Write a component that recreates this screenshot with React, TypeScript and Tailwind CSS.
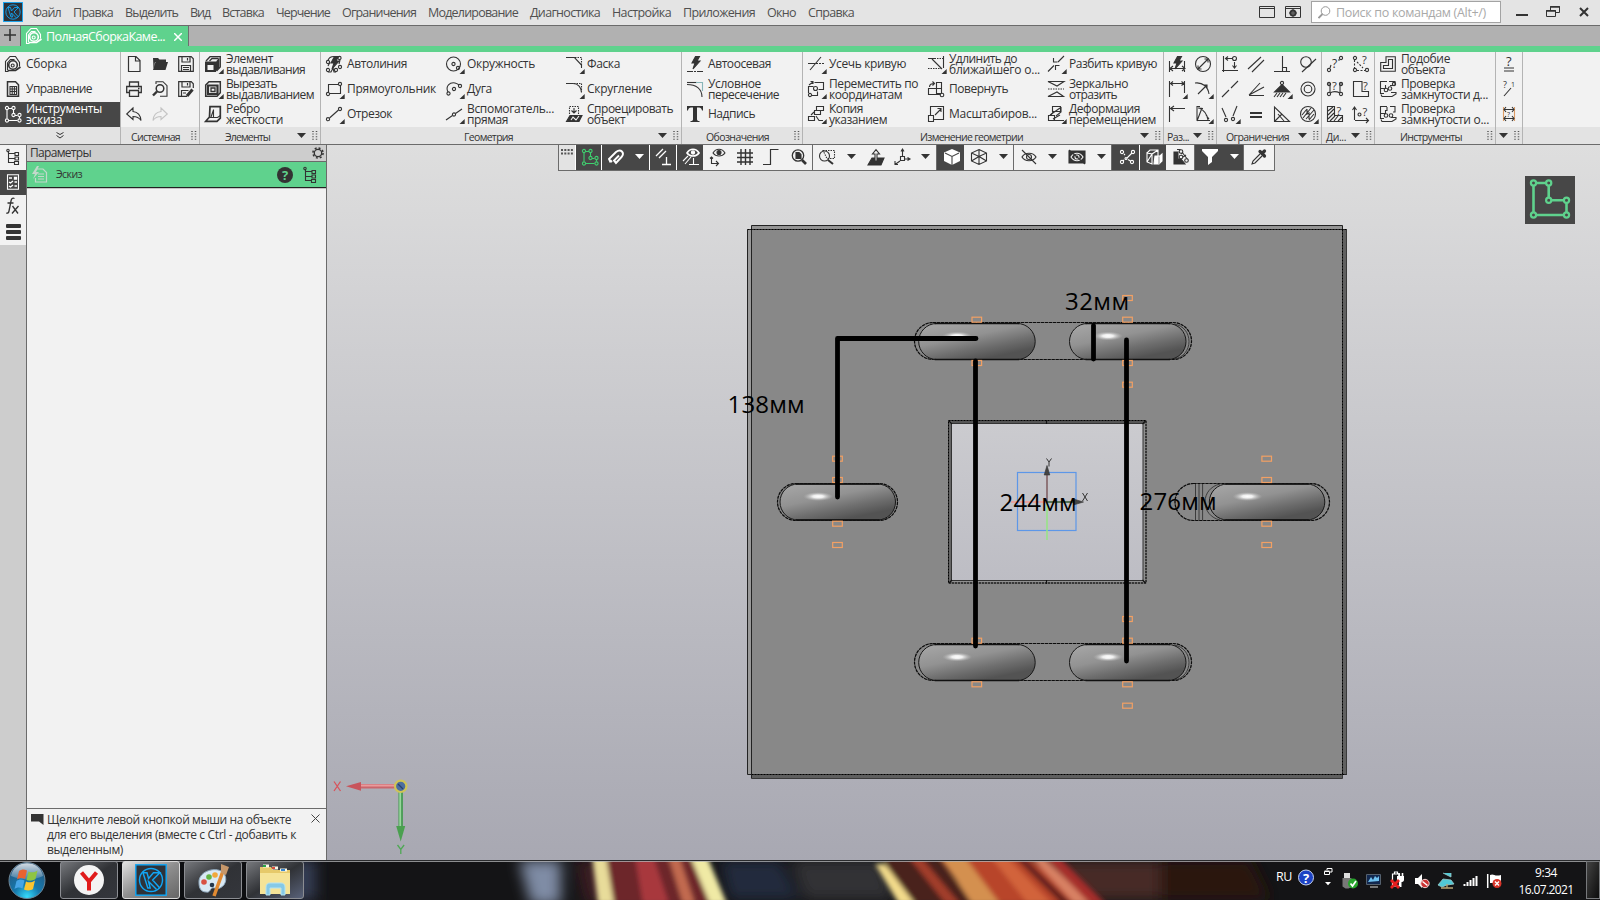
import { useLayoutEffect, useRef } from "react";
import type { ReactNode } from "react";

/* Text whose tracking is adjusted so that it occupies a given width. */
function T({ w, children, className = "" }: { w: number; children: string; className?: string }) {
  const ref = useRef<HTMLSpanElement>(null);
  useLayoutEffect(() => {
    const el = ref.current;
    if (!el) return;
    el.style.letterSpacing = "0px";
    const natural = el.getBoundingClientRect().width;
    el.style.letterSpacing = `${(w - natural) / children.length}px`;
  }, [w, children]);
  return (
    <span ref={ref} className={`block whitespace-pre ${className}`}>
      {children}
    </span>
  );
}

const c = (x: number, y: number, r = 1.6, fill = "none") => <circle cx={x} cy={y} r={r} fill={fill} />;
const q = (x: number, y: number, size = 11) => (
  <text x={x} y={y} fontSize={size} fill="#333" stroke="none" fontFamily="Open Sans, sans-serif">?</text>
);
const bolt = "M8.5 0.5h4L10 5h3L6 13l2-6H5z";

const icons: Record<string, ReactNode> = {
  assembly: (
    <>
      <path d="M3.5 15.500H.5V5.500L5 .5h5.500l4 6v4" />
      <circle cx="8" cy="9" r="4.300" strokeWidth="1.600" />
      <circle cx="7.700" cy="9.500" r="1.500" />
      <path d="M2.500 14.500h8l5-3.500" strokeWidth="1.700" />
      <path d="M2.500 14V7l3-3.500h4" />
    </>
  ),
  manage: (
    <>
      <path d="M2.500.7h8l3 3v11.600h-11z" strokeWidth="1.500" />
      <path d="M5 5.500h6.500v8H5zM5 8h6.500M5 10.500h6.500M7.200 5.500v8M9.400 5.500v8" />
    </>
  ),
  sketch: (
    <>
      <path d="M2 4v8.500M4 14.500h8.500M14.500 12.500V11M12.500 9.500H10M8.500 7.500V4M3.500 2.500H7" />
      {c(2, 2)}{c(8.500, 2)}{c(8.500, 9)}{c(14.500, 9)}{c(2, 14.500)}{c(14.500, 14.500)}
    </>
  ),
  newf: <path d="M2.500.500h7.500l4 4v11H2.500zM9.500.500v4.500H14" strokeWidth="1.200" />,
  open: <path d="M1 2h5l1.500 1.500H14V6H3L1.500 13zM3.500 6H16l-2.500 8H1z" fill="currentColor" stroke="none" />,
  save: <path d="M.7.7h12.500l2.100 2.100v12.500H.7zM4 .7v5.300h8V.7M9.500 2v2.500M3.500 15.300V9.500h9v5.800M5 11.500h6M5 13.500h6" strokeWidth="1.200" />,
  saveas: (
    <>
      <path d="M9 15.300H.7V.7h12.500l2.100 2.100V7M4 .7v5.300h8V.7M9.500 2v2.500M3.500 15.300V9.500h7M5 12h3" strokeWidth="1.200" />
      <path d="M9 15 14.500 8.500" strokeWidth="3" />
    </>
  ),
  print: <path d="M3.500 5V1h9v4M3 11.500H.7V5.500h14.600v6H13M3.500 9.500h9v5.800h-9zM12 7.500h1.500" strokeWidth="1.300" />,
  preview: (
    <>
      <path d="M4 3V.7h7l4 4v10.600H8" />
      <circle cx="8" cy="7.500" r="3.800" strokeWidth="1.500" />
      <path d="m5 10.500-4 4" strokeWidth="2.400" />
    </>
  ),
  undo: <path d="M7 2 .7 8 7 13.500V10.500c4 0 6 1 8 4C14.500 9 12 6 7 5.500z" />,
  redo: <path d="M9 2l6.300 6L9 13.500V10.500c-4 0-6 1-8 4C1.500 9 4 6 9 5.500z" stroke="#c4c4c4" />,
  extrude: (
    <>
      <path d="M0 5.500h11V16H0z" fill="#333" stroke="none" />
      <path d="M2.500 9H8.500v5H2.500z" fill="#f2f2f2" stroke="none" />
      <path d="M1 5 5 .7h10.300V11L11.500 15M4.500 5 7 2.500h6.500" strokeWidth="1.300" />
      <path d="M11 5.500l3.500-4v10L11 15z" fill="#333" stroke="none" />
    </>
  ),
  cut: (
    <>
      <path d="M.7 4 4 .7h11.300v11L12 15.300H.7z" strokeWidth="1.500" />
      <path d="M3 4.500h9.500v8.500H3z" strokeWidth="2.200" />
      <path d="M6 7h4v3.500H6z" fill="#f2f2f2" strokeWidth="1.300" />
    </>
  ),
  rib: (
    <>
      <path d="M5 .7h10.300v11.500L12 15.300H.7L4.500 11z" strokeWidth="1.700" />
      <path d="M8.500 3.500v8M4.500 11.500h8l3-2M8.500 4 6 11" />
    </>
  ),
  autoline: (
    <>
      <path d="M2 4.500C3 1 5 .5 8 .5M2 10l2-4M2 16h3l2-4 1 4h2M14 4l-1 4" />
      <path d={bolt} fill="#333" />
      {c(2, 6)}{c(13.500, 2)}{c(2, 14)}{c(10, 14)}{c(14, 11)}
    </>
  ),
  rect: <><path d="M2.500 11V3.500h10M14.500 5v7.500H4" />{c(14, 3)}{c(2, 13)}</>,
  line: <><path d="m3.500 12 9-8" />{c(2, 13.200)}{c(14, 3)}</>,
  circle: <><circle cx="7.500" cy="8" r="7" />{c(7.500, 8)}{c(12, 12)}</>,
  arc: <><path d="M2 11C-1 5 4 1 9 2c2 .5 3 1 4 2" />{c(8, 8)}{c(2.500, 12.500)}{c(14, 5)}</>,
  auxline: <><path d="M0 14 6.500 9.500M9.500 7.500 16 3" />{c(8, 8.500)}</>,
  chamfer: <><path d="M0 1.500h8.500l7 7.500v3" /><path d="M9 1.500h6.500v8" strokeDasharray="1.500 1" /></>,
  fillet: <><path d="M0 2.500h7c5 0 8.500 4 8.500 9" /><path d="M8 2.500h7.500v8" strokeDasharray="1.500 1" /></>,
  project: (
    <>
      <path d="M3.500 8V.5h9V8" strokeDasharray="1.500 1" />
      <path d="M8 2v5M5.500 4.500 8 7l2.500-2.500" />
      <path d="M4 9.500h12l-3 6H.5z" fill="#333" />
      <path d="m5 14 2-3 3 3 3-4" stroke="#f2f2f2" />
    </>
  ),
  autoaxis: <><path d={bolt} fill="#333" /><path d="M0 15.500h16" strokeDasharray="6 1 2 1" /></>,
  intersect: <><path d="M0 3.500c9 0 15 4 15 12.500" /><path d="M0 1.500h10" /><path d="M9 1.500h6.500V10" stroke="#88b5b8" /></>,
  text: <path d="M0 0h16v4.500h-1C14.500 2 13.500 1.500 10 1.500V13c0 1.500.5 2 2.500 2v1h-9v-1c2 0 2.500-.5 2.500-2V1.500C2.500 1.500 1.500 2 1 4.500H0z" fill="#333" stroke="none" />,
  trim: <><path d="m2 14 11-13M0 7.500h7" /><path d="M8 7.500h9" strokeDasharray="2 1" /></>,
  move: <><path d="M6.500 1.500h9v7h-5M.5 12V5.500h5M3.500 14.500h6v-4M1 4l4-3M2.500.5H5V3" />{c(7.500, 7.500, 2)}{c(2, 14)}</>,
  copy: <><path d="M8.500.5h7v4h-7zM6.500 4.500h6v4h-6zM.5 10.500h6v4h-6zM3 9l3-3M8 10l3 4.500h4" /></>,
  extend: <><path d="M0 2.500h8M4 3l10 10M15.500 0v12" /><path d="M0 12.500h13M9 2.500h6" strokeDasharray="1.500 1" /></>,
  rotate: <><path d="M8.500 1.500h5v11h-5zM.5 7.500h13v6H.5zM1.500 6c0-3 2-3.500 5-3.500M4.500.500l2 2-2 2" />{c(14, 14, 1.800, "#f2f2f2")}</>,
  scale: <><path d="M2.500 9V.5h13v13H6M7 9l6-6M9.500 2.500H13V6M.5 9.500h5v6h-5z" /></>,
  split: <><path d="M0 15.500 6 9.500M10 6l6-6M5.500 2v4h4M7.500 14V9.500h4" /></>,
  mirror: <><path d="M0 .5h16L9 5zM15.500 15.500H0l9-4.500zM9 11l6 4" /><path d="M0 8h16" strokeDasharray="1.500 1" /></>,
  deform: <><path d="M4.500.5h8v5h-8zM.5 9.500h6v5h-6zM7 14.500h9M2 9l10-7M5 13l7-4" /><path d="m6 5-3 4M13 1v5l-5 4" /></>,
  autodim: <><path d="M.5 5v11M15.500 5v11M2 12.500h13M4 10l-3 2.500L4 15M13 10l3 2.500L13 15" /><path d={bolt} fill="#333" /></>,
  diameter: <><circle cx="8" cy="8" r="7.500" /><path d="m3 13 10-10M3 9.500V13h3.500M13 6.500V3H9.500" /></>,
  dimline: <><path d="M.5 0v16M15.500 0v12M2 2.500h13M4 .5l-2.500 2L4 4.500M12.500.5l2.500 2-2.500 2" /></>,
  dimarc: <><path d="M0 2c8-1 13 4 14 11M3 13l9-9M8 4h4v4" /></>,
  dimbase: <><path d="M.5 0v16M1 2.500h15M5 0 1.500 2.500 5 5" /></>,
  dimangle: <><path d="M2 14.500V.5h3M2 14.500h13M2 15l5-13M4 2c5 2 8 6 9 12M3 2l5 .5M14 13l-3-4" /></>,
  constraint: <><path d="M1.500 0v16M0 14.500h16M4 2.500h6M6 .5 3.500 2.500 6 4.500M12.500 6v6M10.500 9.500l2 2.500 2-2.500" />{c(12.500, 2.500, 2)}</>,
  parallel: <path d="M0 13 13 1M4 16 16 4" />,
  perp: <path d="M0 15.500h16M8.500 15V0M8.500 11.500h4V15" />,
  tangent: <><circle cx="6" cy="6" r="5.300" /><path d="M2 16 16 3" /></>,
  collinear: <path d="m0 16 7-7M9 7l7-7" />,
  angle: <path d="M1 14.500h15M1 14 12 2M1 14 16 6" />,
  fix: <><circle cx="8" cy="2" r="1.600" /><path d="M8 3.500 15.500 11H.5z" fill="#333" /><path d="m3 12-3 4M6 12l-3 4M9 12l-3 4M12 12l-3 4" /></>,
  concentric: <><circle cx="8" cy="8" r="7" /><circle cx="8" cy="8" r="3.800" /></>,
  symmetric: <><path d="m0 2 4 9M15 0l-4 10" />{c(4, 14)}{c(11, 13)}</>,
  equal: <path d="M2 7h12M2 11h12" strokeWidth="1.800" />,
  tri: <path d="M.5 1v14.500h15zM1 15 8 8M4 8l6 7" />,
  hatchcirc: <><circle cx="8" cy="8" r="7.500" /><path d="m2 9 5-6M3 12l8-10M6 13l8-9M9 14l5-6M7 3v5l2-1v6" /></>,
  q1: <>{q(5, 12, 12)}{c(2, 14)}{c(14, 2)}<path d="m3 12 1-3M11 4h2" /></>,
  q2: <>{q(9, 8)}{c(2, 2)}{c(2, 14)}{c(14, 14)}<path d="M1.500 4v8M4 14.500h8M4 6l6 6" strokeDasharray="2 1.500" /></>,
  q3: <>{q(5, 9)}<path d="M1 3h3M12 3h3M3 4v7M13 4v7M3 12c3-2 6-2 10 0" />{c(2, 3)}{c(14, 3)}{c(2, 13)}{c(14, 13)}</>,
  q4: <>{q(10, 9)}<path d="M9 .5H.5v15h15v-5H9z" /></>,
  q5: <>{q(9.500, 9)}<path d="M.5.5h7v9h8v6H.5z" /><path d="m1 5 5-4M1 9l6-6M1 13l6-6M3 15l5-5M7 15l4-5M11 15l4-4" /></>,
  q6: <>{q(9.500, 10)}<path d="M1.500 14V2M-.5 4l2-3 2 3M2 14.500h13M13 12l2.500 2.500L13 17" />{c(6.500, 8.500, 1.500)}</>,
  offset: <><path d="M6 .7h9.300v14.600H.7V6.500H6z" /><path d="M8.500 3.500h4v9H3.500V9.500h5z" /></>,
  check1: <><path d="M7 .5H.5v12H4M5.500 4v3.500H1M9 .5h6v4M11 11.500h5v1.500l-4 2.500H2l-1-2M10 4.500h5" />{c(6, 9, 1.800)}{c(10, 7.500, 1.800)}{c(14, 3)}</>,
  check2: <><path d="M7 .5H.5v12H4M5.500 4v3.500H1M10 .5h5v5.500h-2M11 11.500h5v1.500l-4 2.500H2l-1-2M7 1v3.500H5" />{c(6, 9.500, 1.800)}{c(11, 9.500, 1.800)}</>,
  qa: <>{q(5, 9.500, 13)}<path d="M3 12h10M3 15h10" /></>,
  qb: <>{q(2, 7, 9)}<text x="10" y="6" fontSize="7" fill="#333" stroke="none" fontFamily="Open Sans">1</text><path d="m3 15 7-8" /></>,
  qc: <><path d="M2.500 1v14M13.500 1v14" stroke="#dc9b63" /><path d="M3 3.500h10M5 1 3 3.500 5 6M11 1l2 2.500L11 6M3 12.500h10M5 10l-2 2.500L5 15M11 10l2 2.500-2 2.500" />{q(6, 11, 7)}</>,
  tree: <><path d="M3.500 2v11.500H9M3.500 4.500H10M3.500 9.500H10" />{c(3, 1.500, 1.200)}<path d="M10 3.500h3.500v3H10zM10 8h3.500v3H10zM9.500 12.500h4v3h-4z" /></>,
  params: <><path d="M2.500.7h11v14.600h-11z" /><path d="M4 4h3M4 8l1.500 1L8 7M4 12l1.500 1L8 11M9.500 3.500h2v1.500h-2zM9.500 8h2.500M9.500 12h2.500" strokeWidth="1.300" /></>,
  magnet: <><path d="M2.500 13.500 1 10l7-7c5-4 9 1 5.500 5L8 14l-2-2.500 5-5M1 10l3 3M6 11l2 3" strokeWidth="1.900" /></>,
  snap: <path d="m0 7 7-7M3 9l7-7M6 15.500h9M10.500 8v7.500" strokeWidth="1.300" />,
  snapeye: <><path d="M4 4c3-5 9-5 12 0-3 4-9 4-12 0z" strokeWidth="1.700" />{c(10, 3.500, 1.600, "currentColor")}<path d="m0 12 5-5M2 15l6-7M6 15.500h10M10.500 9v6" /></>,
  eyeaxis: <><path d="M3 4c3-5 9-5 12 0-3 4-9 4-12 0z" />{c(9, 3.500, 2, "currentColor")}<path d="M1.500 8v6.500H8M6 12l2.500 2.500L6 17M0 9.500 1.500 8 3 9.500" /></>,
  grid: <path d="M0 4h16M0 8.500h16M0 13h16M4 0v16M8.500 0v16M13 0v16" strokeWidth="1.400" />,
  step: <path d="M0 15.500h7.500V.5h8" strokeWidth="1.200" />,
  zoomp: <><circle cx="7" cy="6.500" r="5.700" strokeWidth="1.300" /><path d="M5 3.500h3l2 2v4H5z" fill="#333" /><path d="m11 11 4 4" strokeWidth="2.600" /></>,
  zoomw: <><circle cx="5.500" cy="7" r="5" /><path d="M4 1.500h11.500v8H8z" strokeDasharray="1.500 1" /><path d="m9 11 5 4" strokeWidth="2" /></>,
  normal: <><path d="M4 9h12l-3 7H0z" fill="#333" /><path d="M7 12V5H4.500L8 .7 11.500 5H9v7z" fill="#f2f2f2" /></>,
  axes: <><path d="M6.500 7.500h4v4h-4zM8.500 7.500V0M7 2.500 8.500 0 10 2.500M10.500 10H16M13.500 8.500 16 10l-2.500 1.500M6 12l-5 3.500M1 12v3.500h3" /></>,
  cube: <><path d="M8 0 16 3.500v8.500L8 16 0 12V3.500z" fill="currentColor" stroke="none" /><path d="m1 4 7 3.500L15 4M8 7.500V16" stroke="#474747" /></>,
  cubewire: <path d="M8 .5 15.500 4v8L8 15.500.5 12V4zM.5 4 8 7.500 15.500 4M8 7.500v8M8 .5v7M.5 12 8 7.500l7.500 4.500" />,
  hide: <><path d="M1 8c3-5 11-5 14 0-3 5-11 5-14 0z" strokeWidth="1.200" />{c(8, 8, 2.500)}<path d="m1 1 14 14" /></>,
  eyebox: <><path d="M0 2h16v12H0z" fill="#333" /><path d="M2 8c3-5 9-5 12 0-3 5-9 5-12 0z" stroke="#f2f2f2" fill="#333" /><circle cx="8" cy="8" r="2" stroke="#f2f2f2" /><path d="m0 1 16 14" /></>,
  points: <><path d="m8 9 5-5M5 5l1 1M5 11l-1 1" />{c(3, 3)}{c(14, 3)}{c(3, 13)}{c(13, 13)}{c(7, 9.500, 1)}<path d="m9 10.500 2.500 1.500" /></>,
  boxes: <><path d="M1 4 4 1h8v6M1 4v9l5 2V5zM6 5l6-4M6 5l-5 8" /><path d="M9 7h5l2-2v7l-3 3H8z" fill="#fff" /><path d="M13 7.500V15" stroke="#999" /></>,
  sketch3: <><path d="M1 3v12h11L8 10H5V3z" fill="#333" /><path d="M4 .5h3l8 10.500M8 5l2-2M10 8l3-2" />{c(8, 2.500, 1.800, "#f2f2f2")}{c(8, 8, 1.800, "#f2f2f2")}{c(13.500, 11.500, 1.800, "#f2f2f2")}</>,
  filter: <path d="M0 0h16v2l-6 6v5l-4 3V8L0 2z" fill="currentColor" stroke="none" />,
  picker: <><path d="m9 5-7 7-1 3 3-1 7-7" /><path d="m9 2.500 4.500 4.500M11 4.500l2.500-2.500" fill="#333" strokeWidth="3.200" strokeLinecap="round" /></>,
};

function Icon({ n, mark = false }: { n: string; mark?: boolean }) {
  return (
    <svg width="16" height="16" viewBox="0 0 16 16" fill="none" stroke="currentColor" strokeWidth="1.1" className="block shrink-0 overflow-visible">
      {icons[n]}
      {mark && <path d="M18.700 13v5h-5.200z" fill="#333" stroke="none" />}
    </svg>
  );
}

type Line = [string, number];
type Item = { i: string; m?: boolean; l?: Line[] };

function Cell({ item, pad, gap }: { item: Item; pad: string; gap: string }) {
  return (
    <div className={`flex h-[25px] items-start ${pad}`}>
      <div className={`pt-1 ${gap}`}>
        <Icon n={item.i} mark={item.m} />
      </div>
      {item.l && (
        <div className="flex h-[25px] flex-col items-start justify-center pb-[2px] text-[12px] leading-[11px]">
          {item.l.map(([t, w]) => (
            <T key={t} w={w}>{t}</T>
          ))}
        </div>
      )}
    </div>
  );
}

const Down = ({ className = "" }: { className?: string }) => (
  <svg width="9" height="5" viewBox="0 0 9 5" className={`shrink-0 ${className}`}>
    <path d="M0 0h9L4.500 5z" fill="currentColor" />
  </svg>
);

const Dots = () => (
  <svg width="6" height="9" viewBox="0 0 6 9" className="mr-[2px] shrink-0">
    <path d="M1 0v9M4.500 0v9" stroke="#555" strokeWidth="1.500" strokeDasharray="1 1.600" />
  </svg>
);

type GroupDef = { w: string; cols: Item[][]; col: string; gap: string; label?: Line; ml?: string; down?: boolean };

function Group({ g }: { g: GroupDef }) {
  return (
    <div className={`flex shrink-0 flex-col border-l border-[#b4b4b4] ${g.w}`}>
      <div className="flex h-[75px]">
        {g.cols.map((col, k) => (
          <div key={k} className={`shrink-0 ${g.col}`}>
            {col.map((it) => (
              <Cell key={it.i} item={it} pad="pl-[5px]" gap={g.gap} />
            ))}
          </div>
        ))}
      </div>
      <div className="flex h-[17px] items-center bg-[#e3e3e3]">
        {g.label && <T w={g.label[1]} className={`pt-[2px] text-[10.5px] leading-[16px] ${g.ml}`}>{g.label[0]}</T>}
        <div className="ml-auto flex items-center gap-[6px]">
          {g.down && <Down />}
          <Dots />
        </div>
      </div>
    </div>
  );
}

const groups: GroupDef[] = [
  {
    w: "w-[79px]", col: "w-[26px]", gap: "", label: ["Системная", 49], ml: "ml-[10px]",
    cols: [
      [{ i: "newf" }, { i: "print" }, { i: "undo" }],
      [{ i: "open" }, { i: "preview" }, { i: "redo" }],
      [{ i: "save" }, { i: "saveas" }],
    ],
  },
  {
    w: "w-[121px]", col: "w-[120px]", gap: "mr-[5px]", label: ["Элементы", 45], ml: "ml-[25px]", down: true,
    cols: [[
      { i: "extrude", m: true, l: [["Элемент", 47], ["выдавливания", 79]] },
      { i: "cut", m: true, l: [["Вырезать", 51], ["выдавливанием", 88]] },
      { i: "rib", l: [["Ребро", 34], ["жесткости", 57]] },
    ]],
  },
  {
    w: "w-[361px]", col: "w-[120px]", gap: "mr-[5px]", label: ["Геометрия", 49], ml: "ml-[143px]", down: true,
    cols: [
      [
        { i: "autoline", l: [["Автолиния", 60]] },
        { i: "rect", m: true, l: [["Прямоугольник", 89]] },
        { i: "line", m: true, l: [["Отрезок", 45]] },
      ],
      [
        { i: "circle", m: true, l: [["Окружность", 68]] },
        { i: "arc", m: true, l: [["Дуга", 25]] },
        { i: "auxline", m: true, l: [["Вспомогатель...", 87], ["прямая", 41]] },
      ],
      [
        { i: "chamfer", m: true, l: [["Фаска", 33]] },
        { i: "fillet", m: true, l: [["Скругление", 65]] },
        { i: "project", l: [["Спроецировать", 86], ["объект", 38]] },
      ],
    ],
  },
  {
    w: "w-[121px]", col: "w-[120px]", gap: "mr-[5px]", label: ["Обозначения", 63], ml: "ml-[24px]",
    cols: [[
      { i: "autoaxis", l: [["Автоосевая", 63]] },
      { i: "intersect", l: [["Условное", 53], ["пересечение", 71]] },
      { i: "text", l: [["Надпись", 47]] },
    ]],
  },
  {
    w: "w-[361px]", col: "w-[120px]", gap: "mr-[5px]", label: ["Изменение геометрии", 103], ml: "ml-[117px]", down: true,
    cols: [
      [
        { i: "trim", m: true, l: [["Усечь кривую", 77]] },
        { i: "move", m: true, l: [["Переместить по", 89], ["координатам", 73]] },
        { i: "copy", m: true, l: [["Копия", 34], ["указанием", 58]] },
      ],
      [
        { i: "extend", m: true, l: [["Удлинить до", 68], ["ближайшего о...", 91]] },
        { i: "rotate", l: [["Повернуть", 59]] },
        { i: "scale", l: [["Масштабиров...", 88]] },
      ],
      [
        { i: "split", m: true, l: [["Разбить кривую", 88]] },
        { i: "mirror", l: [["Зеркально", 59], ["отразить", 48]] },
        { i: "deform", m: true, l: [["Деформация", 71], ["перемещением", 87]] },
      ],
    ],
  },
  {
    w: "w-[53px]", col: "w-[26px]", gap: "", label: ["Раз...", 22], ml: "ml-[3px]", down: true,
    cols: [
      [{ i: "autodim" }, { i: "dimline", m: true }, { i: "dimbase" }],
      [{ i: "diameter" }, { i: "dimarc", m: true }, { i: "dimangle", m: true }],
    ],
  },
  {
    w: "w-[105px]", col: "w-[26px]", gap: "", label: ["Ограничения", 63], ml: "ml-[9px]", down: true,
    cols: [
      [{ i: "constraint" }, { i: "collinear" }, { i: "symmetric", m: true }],
      [{ i: "parallel" }, { i: "angle" }, { i: "equal" }],
      [{ i: "perp" }, { i: "fix", m: true }, { i: "tri" }],
      [{ i: "tangent" }, { i: "concentric" }, { i: "hatchcirc", m: true }],
    ],
  },
  {
    w: "w-[53px]", col: "w-[26px]", gap: "", label: ["Ди...", 20], ml: "ml-[4px]", down: true,
    cols: [
      [{ i: "q1" }, { i: "q3" }, { i: "q5" }],
      [{ i: "q2" }, { i: "q4" }, { i: "q6" }],
    ],
  },
  {
    w: "w-[121px]", col: "w-[120px]", gap: "mr-[5px]", label: ["Инструменты", 62], ml: "ml-[25px]",
    cols: [[
      { i: "offset", l: [["Подобие", 49], ["объекта", 44]] },
      { i: "check1", l: [["Проверка", 54], ["замкнутости д...", 87]] },
      { i: "check2", l: [["Проверка", 54], ["замкнутости о...", 88]] },
    ]],
  },
  { w: "w-[27px]", col: "w-[26px]", gap: "", down: true, cols: [[{ i: "qa" }, { i: "qb" }, { i: "qc" }]] },
];

const menu: Line[] = [
  ["Файл", 29], ["Правка", 40], ["Выделить", 53], ["Вид", 20], ["Вставка", 42], ["Черчение", 54], ["Ограничения", 74],
  ["Моделирование", 90], ["Диагностика", 70], ["Настройка", 59], ["Приложения", 72], ["Окно", 29], ["Справка", 46],
];

function KLogo({ size }: { size: number }) {
  return (
    <svg width={size} height={size} viewBox="0 0 20 20" className="block shrink-0">
      <rect x=".5" y=".5" width="19" height="19" fill="#2e3238" stroke="#12a5f4" strokeWidth=".9" />
      <circle cx="10" cy="10" r="7.200" fill="none" stroke="#12a5f4" strokeWidth=".9" />
      <path d="M5 5.500h2.500l1 3.500 3-3.500h4L11 10l4.500 5M5 5.500l3 9.500h1.500L8.500 11l5 5" fill="none" stroke="#12a5f4" strokeWidth=".9" />
    </svg>
  );
}

function TopBar() {
  return (
    <div className="flex h-[26px] shrink-0 items-center border-b border-[#6b6b6b] bg-[#e4e4e4] text-[#505050]">
      <div className="ml-[3px] mr-[9px] mt-[-1px]"><KLogo size={20} /></div>
      <div className="flex gap-3 text-[12.5px] leading-[24px]">
        {menu.map(([t, w]) => <T key={t} w={w}>{t}</T>)}
      </div>
      <svg width="44" height="14" viewBox="0 0 44 14" className="ml-auto mr-[8px]" fill="none" stroke="#333">
        <path d="M.5.500h15v11H.500zM.500 2.500h15M26.500.500h15v11h-15zM26.500 2.500h15" />
        <circle cx="34" cy="7" r="2.500" strokeWidth="2" />
        <path d="M34 3v8M30 7h8" strokeWidth="1" />
      </svg>
      <div className="mt-[-1px] flex h-[22px] w-[190px] items-center border border-[#a3a3a3] bg-white pl-[6px] text-[12.5px] text-[#a9a9a9]">
        <svg width="13" height="13" viewBox="0 0 13 13" fill="none" stroke="#999" className="mr-[5px] mt-px shrink-0">
          <circle cx="7.500" cy="5" r="4.300" /><path d="m4.500 8-4 4" strokeWidth="1.800" />
        </svg>
        <T w={150} className="pt-px leading-[20px]">Поиск по командам (Alt+/)</T>
      </div>
      <svg width="84" height="14" viewBox="0 0 84 14" className="ml-[10px] mr-[5px]" fill="none" stroke="#333">
        <path d="M5 9h12" strokeWidth="2" />
        <path d="M35.500 4.500h9v6h-9zM39.500 4V.5h9v6h-4" />
        <path d="M35 5h10M39 1h10" strokeWidth="1.500" />
        <path d="m69 2 8 8M77 2l-8 8" strokeWidth="2" />
      </svg>
    </div>
  );
}

function TabBar() {
  return (
    <div className="flex h-[26px] shrink-0 border-b-[6px] border-[#5fd28d] bg-[#b1b1b1]">
      <svg width="20" height="20" viewBox="0 0 20 20" stroke="#333" strokeWidth="1.600"><path d="M4 9h12M10 3v12" /></svg>
      <div className="flex h-5 w-[169px] items-center border-x border-[#6e6e6e] bg-[#5fd28d] pl-[5px] text-white">
        <Icon n="assembly" />
        <T w={119} className="ml-[4px] pt-px text-[12.5px] leading-[22px]">ПолнаяСборкаКаме...</T>
        <svg width="8" height="8" viewBox="0 0 8 8" stroke="currentColor" strokeWidth="1.500" className="ml-[9px] mt-px"><path d="m0 0 8 8M8 0 0 8" /></svg>
      </div>
    </div>
  );
}

function Ribbon() {
  const sets: Item[] = [
    { i: "assembly", l: [["Сборка", 41]] },
    { i: "manage", l: [["Управление", 66]] },
    { i: "sketch", l: [["Инструменты", 76], ["эскиза", 36]] },
  ];
  return (
    <div className="flex h-[93px] shrink-0 border-b border-[#6b6b6b] bg-[#f2f2f2] text-[#333]">
      <div className="w-[120px] shrink-0">
        {sets.map((s, k) => (
          <div key={s.i} className={k === 2 ? "bg-[#474747] text-white" : ""}>
            <Cell item={s} pad="pl-[5px]" gap="mr-[5px]" />
          </div>
        ))}
        <div className="flex h-[17px] items-center justify-center bg-[#e3e3e3]">
          <svg width="8" height="7" viewBox="0 0 8 7" fill="none" stroke="#333"><path d="m.500.500 3.500 2 3.500-2M.500 3.500l3.500 2.500 3.500-2.500" /></svg>
        </div>
      </div>
      {groups.map((g, k) => <Group key={k} g={g} />)}
      <div className="flex flex-1 flex-col border-l border-[#b4b4b4]">
        <div className="mt-auto h-[17px] bg-[#e3e3e3]" />
      </div>
    </div>
  );
}

function Side() {
  return (
    <div className="flex w-[327px] shrink-0 text-[#333]">
      <div className="flex w-[26px] shrink-0 flex-col items-center bg-[#cdcdcd]">
        <div className="flex h-[25px] w-full items-center justify-center bg-[#f2f2f2] pb-[2px]"><Icon n="tree" /></div>
        <div className="flex h-[25px] w-full items-center justify-center bg-[#474747] pb-[2px] text-white"><Icon n="params" /></div>
        <div className="flex h-[25px] w-full items-center justify-center bg-[#f2f2f2] pb-1">
          <svg width="14" height="18" viewBox="0 0 14 18" fill="none" stroke="#333" strokeWidth="1.300">
            <path d="M8.500 1.500C6.500.5 5.500 1.500 5 4L3 14c-.4 1.800-1.200 2.500-2.800 2M1.500 6H7.500" />
            <path d="m6.500 9 5.500 7.500M12.500 9l-6.500 7.500" />
          </svg>
        </div>
        <div className="flex h-[25px] w-full flex-col items-center justify-center gap-[2px] bg-[#f2f2f2] pb-[2px]">
          <div className="h-1 w-[15px] rounded-[1px] bg-[#333]" />
          <div className="h-1 w-[15px] rounded-[1px] bg-[#333]" />
          <div className="h-1 w-[15px] rounded-[1px] bg-[#333]" />
        </div>
      </div>
      <div className="flex w-[301px] flex-col border-x border-[#6b6b6b] bg-[#f2f2f2]">
        <div className="flex h-[17px] shrink-0 items-center border-b border-[#6b6b6b] bg-[#cdcdcd] pl-[3px]">
          <T w={61} className="text-[12px] leading-[16px]">Параметры</T>
          <svg width="12" height="12" viewBox="0 0 12 12" className="ml-auto mr-[2px]" fill="none" stroke="#333">
            <circle cx="6" cy="6" r="3.700" strokeWidth="1.300" />
            <circle cx="6" cy="6" r="5.100" strokeWidth="1.500" strokeDasharray="2 2" />
          </svg>
        </div>
        <div className="flex h-[26px] shrink-0 items-center border-b border-[#222] bg-[#5fd28d]">
          <svg width="16" height="17" viewBox="0 0 16 17" className="ml-[5px]" fill="none" stroke="#c3d8cb" strokeWidth="1.200">
            <path d="M5 3h6l3.500 3.500V16H3.500v-4" /><path d="M6 8h6M6 10.500h6M6 13h6" /><path d="M5 0 0 8h3l-2 5 6-7H4l3-6z" fill="#c3d8cb" stroke="none" />
          </svg>
          <T w={26} className="ml-[8px] pb-[2px] text-[10.5px] leading-[22px]">Эскиз</T>
          <svg width="16" height="16" viewBox="0 0 16 16" className="ml-auto">
            <circle cx="8" cy="8" r="8" fill="#333" />
            <text x="8" y="12.500" textAnchor="middle" fontSize="13" fontWeight="700" fill="#5fd28d" fontFamily="Open Sans, sans-serif">?</text>
          </svg>
          <div className="ml-[9px] mr-[8px]"><Icon n="tree" /></div>
        </div>
        <div className="h-px shrink-0 bg-[#c4c4c4]" />
        <div className="mt-auto flex h-[52px] shrink-0 border-t border-[#6b6b6b] pl-[4px] pt-[5px]">
          <svg width="13" height="12" viewBox="0 0 13 12" className="mr-[3px]"><path d="M0 0h12.500v11L8 7.500H0z" fill="#333" /></svg>
          <div className="flex flex-col items-start text-[12px] leading-[15px]">
            <T w={244} className="mt-[-2px]">Щелкните левой кнопкой мыши на объекте</T>
            <T w={249}>для его выделения (вместе с Ctrl - добавить к</T>
            <T w={76}>выделенным)</T>
          </div>
          <svg width="9" height="9" viewBox="0 0 9 9" className="ml-auto mr-[6px]" stroke="#444"><path d="m.500.500 8 8M8.500.500l-8 8" /></svg>
        </div>
      </div>
    </div>
  );
}

type Tool = { n: string; w: string; dark?: boolean; sep?: boolean; light?: boolean; green?: boolean };
const tools: Tool[] = [
  { n: "sketch", w: "w-[26px]", dark: true, green: true, light: true },
  { n: "magnet", w: "w-[27px]", dark: true, light: true },
  { n: "down", w: "w-[21px]", dark: true },
  { n: "snap", w: "w-[27px]", dark: true, light: true },
  { n: "snapeye", w: "w-[27px]", dark: true, light: true },
  { n: "eyeaxis", w: "w-[27px]" },
  { n: "grid", w: "w-[27px]" },
  { n: "step", w: "w-[26px]" },
  { n: "zoomp", w: "w-[29px]" },
  { n: "zoomw", w: "w-[27px]", sep: true },
  { n: "down", w: "w-[23px]" },
  { n: "normal", w: "w-[26px]" },
  { n: "axes", w: "w-[25px]" },
  { n: "down", w: "w-[23px]" },
  { n: "cube", w: "w-[28px]", dark: true, light: true, sep: true },
  { n: "cubewire", w: "w-[27px]" },
  { n: "down", w: "w-[22px]" },
  { n: "hide", w: "w-[28px]", sep: true },
  { n: "down", w: "w-[21px]" },
  { n: "eyebox", w: "w-[27px]" },
  { n: "down", w: "w-[22px]" },
  { n: "points", w: "w-[28px]", dark: true, light: true, sep: true },
  { n: "boxes", w: "w-[27px]", dark: true, light: true },
  { n: "sketch3", w: "w-[28px]" },
  { n: "filter", w: "w-[29px]", dark: true, light: true, sep: true },
  { n: "down", w: "w-[20px]", dark: true },
  { n: "picker", w: "w-[29px]", sep: true, light: true },
];

function ViewToolbar() {
  return (
    <div className="ml-[231px] flex h-[26px] w-[717px] border-b border-l border-r border-[#6b6b6b] bg-[#f2f2f2] text-[#333]">
      <div className="flex w-[16px] shrink-0 justify-center bg-[#e3e3e3] pt-[4px]">
        <svg width="12" height="6" viewBox="0 0 12 6" stroke="#555" strokeWidth="2" strokeDasharray="2 1.300"><path d="M0 1h12M0 4.500h12" /></svg>
      </div>
      {tools.map((t, k) => (
        <div key={k} className={`flex shrink-0 items-center justify-center pb-px pl-[2px] ${t.w} ${t.dark ? "bg-[#474747]" : ""} ${t.green ? "text-[#3fcf6f]" : t.dark ? "text-white" : ""} ${t.sep ? "border-l border-[#6b6b6b]" : t.light ? "border-l border-white" : ""}`}>
          {t.n === "down" ? <Down className="mb-[2px]" /> : <Icon n={t.n} />}
        </div>
      ))}
    </div>
  );
}

const marks: [number, number][] = [
  [837.500, 458.700], [837.500, 480], [837.500, 523.700], [837.500, 545],
  [1266.700, 458.700], [1266.700, 480], [1266.700, 523.700], [1266.700, 545],
  [976.800, 319.700], [976.800, 363], [976.800, 640.700], [976.800, 684.300],
  [1127.500, 298], [1127.500, 319.700], [1127.500, 363], [1127.500, 384.700],
  [1127.500, 619], [1127.500, 640.700], [1127.500, 684.300], [1127.500, 705.700],
];

const slots: [number, number, number][] = [[914.500, 322.500, 277], [914.500, 643.500, 277], [777.500, 483.500, 120], [1175, 483.500, 154.500]];

function Pill({ x, y, w = 116.500 }: { x: number; y: number; w?: number }) {
  return (
    <g>
      <rect x={x} y={y} width={w} height="36" rx="18" fill="url(#pill)" stroke="#181818" />
      <path d={`M${x + 16} ${y}h${w - 32}M${x + 16} ${y + 36}h${w - 32}`} stroke="#111" strokeWidth="1.700" />
      <ellipse cx={x + w * 0.330} cy={y + 12.500} rx="15" ry="4.500" fill="url(#shine)" />
    </g>
  );
}

function Drawing() {
  return (
    <svg width="1273" height="689" viewBox="327 171 1273 689" className="block" fill="none">
      <defs>
        <linearGradient id="pill" x1=".2" y1=".05" x2=".8" y2=".95">
          <stop offset="0" stopColor="#a2a2a2" /><stop offset=".35" stopColor="#929292" /><stop offset=".65" stopColor="#6e6e6e" /><stop offset=".9" stopColor="#535353" />
        </linearGradient>
        <radialGradient id="shine">
          <stop offset="0" stopColor="#fff" /><stop offset=".35" stopColor="#fff" stopOpacity=".85" /><stop offset="1" stopColor="#bbb" stopOpacity="0" />
        </radialGradient>
        <linearGradient id="hole" x1="0" y1="0" x2="0" y2="1">
          <stop offset="0" stopColor="#cbcbcf" /><stop offset="1" stopColor="#bdbdc4" />
        </linearGradient>
      </defs>
      <rect x="747.500" y="229.500" width="599" height="545" fill="#888" />
      <rect x="751.500" y="225.500" width="591" height="553" fill="#888" />
      <rect x="752" y="226" width="590" height="3" fill="#949494" />
      <rect x="748" y="230" width="3" height="544" fill="#9a9a9a" />
      <rect x="1343" y="230" width="3" height="544" fill="#616161" />
      <rect x="752" y="775" width="590" height="3" fill="#5f5f5f" />
      <path d="M751.500 778.500V225.500H1342.500M747.500 774.500V229.500M747.500 774.500h4M1342.500 225.500v4" stroke="#222" />
      <path d="M1346.500 229.500V774.500M751.500 778.500h591v-4" stroke="#3a3a3a" />
      <path d="M747.500 229.500H1346.500M751.500 774.500H1346.500M1342.500 229.500V774.500" stroke="#4a4a4a" />
      <path d="M747.500 229.500H1346.500M751.500 774.500H1346.500M1342.500 229.500V774.500" stroke="#000" strokeDasharray="2 1" />

      {slots.map(([x, y, w]) => (
        <g key={`${x}-${y}`}>
          <rect x={x} y={y} width={w} height="37" rx="18.500" stroke="#5a5a5a" />
          <rect x={x} y={y} width={w} height="37" rx="18.500" stroke="#0c0c0c" strokeWidth="1.200" strokeDasharray="3 1" />
        </g>
      ))}
      <path d="M1195.500 484v36M1199 484v36M1202.600 484v36M1220 484c-9 2-15 9-15 18s6 16 15 18M1174 324c20 3 20 32 0 35M1174 645c20 3 20 32 0 35" stroke="#333" strokeWidth=".9" />
      <Pill x={918.700} y={323.500} /><Pill x={1069.500} y={323.500} />
      <Pill x={918.700} y={644.500} /><Pill x={1069.500} y={644.500} />
      <Pill x={780} y={484} w={115.500} /><Pill x={1209.300} y={484} w={115.500} />

      <rect x="948.500" y="420.500" width="197.500" height="162.500" fill="#909090" />
      <rect x="949" y="421" width="196" height="3" fill="#555" />
      <rect x="949" y="421" width="3" height="162" fill="#666" />
      <rect x="951.500" y="423.500" width="191.500" height="157" fill="url(#hole)" stroke="#333" />
      <rect x="948.500" y="420.500" width="197.500" height="162.500" stroke="#555" />
      <rect x="948.500" y="420.500" width="197.500" height="162.500" stroke="#000" strokeDasharray="2 1" />
      <path d="M1046.500 420v4M1046.500 580v4M949 421l3 3M1145.500 421l-3 3M949 583l3-3M1145.500 583l-3-3" stroke="#111" strokeWidth="1.200" />

      <rect x="1017.500" y="472.500" width="58.500" height="58" stroke="#5d97e8" strokeWidth="1.200" />
      <path d="M1011 502h36" stroke="#ef9a94" strokeWidth="1.500" />
      <path d="M1047 473v29" stroke="#7d5a5e" strokeWidth="1.500" />
      <path d="M1047 502v38" stroke="#95e683" strokeWidth="1.500" />
      <path d="M1047 502h30" stroke="#355a35" strokeWidth="1.500" />
      <path d="M1047 465.500l2.800 9.500h-5.600zM1083.500 502l-9.500-2.800v5.600z" fill="#444" stroke="#333" strokeWidth=".6" />
      <path d="M1046.500 458.500l2.500 3.500 2.500-3.500M1049 462v4.500M1082.500 493l5 8M1087.500 493l-5 8" stroke="#333" />

      {marks.map(([x, y]) => (
        <rect key={`${x}-${y}`} x={x - 4.800} y={y - 2.500} width="9.600" height="5" stroke="#f2a064" strokeWidth="1.200" />
      ))}

      <g stroke="#000" strokeWidth="4.800" strokeLinecap="round" strokeLinejoin="round">
        <path d="M976 338.500H837.500V497M975.500 361V646M1126.500 340V661" />
        <path d="M1093.500 325.500V359" />
      </g>
      <g fill="#000" fontSize="24" fontFamily="Open Sans, Noto Sans, sans-serif">
        <text x="727.500" y="413" textLength="77">138мм</text>
        <text x="1065" y="310" textLength="64">32мм</text>
        <text x="999.500" y="511" textLength="77">244мм</text>
        <text x="1139.500" y="510" textLength="77">276мм</text>
      </g>

      <rect x="1525" y="176" width="50" height="48" fill="#474747" />
      <g stroke="#5fd28d" strokeWidth="2.600">
        <path d="M1533.500 183h15.200v17.300h17.800V215h-33z" />
        {[[1533.500, 183], [1548.700, 183], [1548.700, 200.300], [1566.500, 200.300], [1566.500, 215], [1533.500, 215]].map(([x, y]) => (
          <circle key={`${x}-${y}`} cx={x} cy={y} r="2.600" fill="#474747" strokeWidth="2.200" />
        ))}
      </g>

      <path d="M360 786.300h36" stroke="#c9666c" strokeWidth="4.500" />
      <path d="M360 785.500h36" stroke="#e99a9c" strokeWidth="1.800" />
      <path d="M346 786.300l15-4.300v8.800z" fill="#c8545b" />
      <path d="M400.700 792v34" stroke="#4b9c57" strokeWidth="4.500" />
      <path d="M400.200 792v34" stroke="#98d69b" strokeWidth="1.800" />
      <path d="M400.700 841.500l-4.500-15.500h9z" fill="#4aa04f" />
      <circle cx="400.700" cy="786.300" r="5.700" fill="#4c6e9e" stroke="#cfc457" strokeWidth="2.200" />
      <path d="m398 784 5 5" stroke="#26406c" strokeWidth="1.300" />
      <path d="m334 781.500 6.500 9.500M340.500 781.500l-6.500 9.500" stroke="#d8535b" strokeWidth="1.300" />
      <path d="m397.500 845 3.300 4.500 3.300-4.500M400.800 849.500v4.500" stroke="#4fa854" strokeWidth="1.300" />
    </svg>
  );
}

function TaskButton({ children, active = false, className = "to-[#34363c]" }: { children: ReactNode; active?: boolean; className?: string }) {
  return (
    <div className={`flex h-[38px] w-[58px] shrink-0 items-center justify-center rounded-[3px] border ${active ? "border-[#dadada] bg-linear-to-br from-[#e2e2e2] via-[#8e8e8e] to-[#666]" : `border-[#8b8d92] bg-linear-to-br from-[#77797d] via-[#303236] ${className}`}`}>
      {children}
    </div>
  );
}

function Taskbar() {
  return (
    <div className="relative flex h-[40px] shrink-0 overflow-hidden bg-[#0d0e11]">
      <svg width="1600" height="40" viewBox="0 0 1600 40" className="absolute inset-0">
        <defs>
          <filter id="soft" x="-20%" y="-20%" width="140%" height="140%"><feGaussianBlur stdDeviation="2.600" /></filter>
          <filter id="softer" x="-20%" y="-50%" width="140%" height="200%"><feGaussianBlur stdDeviation="7" /></filter>
        </defs>
        <rect x="304" width="1296" height="40" fill="#141416" />
        <g filter="url(#softer)">
          <path d="M290 0h26v40h-26z" fill="#343c54" />
          <path d="M519 0h42v45h-30z" fill="#7f8ca5" />
          <path d="M575 0h40v45h-30z" fill="#3a1c22" />
          <path d="M720 0h60l20 40h-70z" fill="#242c3c" />
          <path d="M790 0h90l15 40h-90z" fill="#303034" />
          <path d="M1040 0h120l40 40h-110z" fill="#472a28" />
          <path d="M1160 0h90l20 40h-110z" fill="#2a1310" />
        </g>
        <g filter="url(#soft)">
          <path d="M604 -4h86l24 48h-106z" fill="#6d262b" />
          <path d="M635 -4h18l16 48h-26z" fill="#a8383e" />
          <path d="M668 -4h11l16 48h-12z" fill="#c26a50" />
          <path d="M592 -4h14l8 48h-16z" fill="#e8dc9a" />
          <path d="M690 -4h17l20 48h-17z" fill="#f0eaa5" />
          <path d="M882 -4h50l45 48h-70z" fill="#49201a" />
          <path d="M875 4h10l30 40h-16z" fill="#f3dc8b" />
          <path d="M908 -4h12l40 48h-14z" fill="#a23c2b" />
          <path d="M936 -4h90l62 48h-112z" fill="#b8452c" />
          <path d="M940 -4h24l36 48h-28z" fill="#d4904f" />
          <path d="M990 -4h16l46 48h-24z" fill="#d2643a" />
          <path d="M1014 -4h8l50 48h-10z" fill="#5a1f1c" />
          <path d="M1030 -4h12l50 48h-17z" fill="#d88164" />
          <path d="M1044 -4h14l48 48h-16z" fill="#a62f2a" />
        </g>
        <rect width="1600" height="1" fill="#2a2b2d" />
        <rect y="1" width="1600" height="1" fill="#b6b7ba" fillOpacity=".75" />
      </svg>
      <div className="relative flex w-full pt-px">
        <svg width="38" height="38" viewBox="0 0 38 38" className="ml-2 mr-[14px] shrink-0">
          <defs>
            <radialGradient id="orb" cx=".5" cy=".95" r=".9"><stop offset="0" stopColor="#35dcfb" /><stop offset=".4" stopColor="#1579ad" /><stop offset="1" stopColor="#27567e" /></radialGradient>
            <linearGradient id="gloss" x1="0" y1="0" x2="0" y2="1"><stop offset="0" stopColor="#fff" stopOpacity=".8" /><stop offset="1" stopColor="#fff" stopOpacity=".15" /></linearGradient>
          </defs>
          <circle cx="19" cy="19.500" r="18" fill="url(#orb)" stroke="#6c8596" />
          <path d="M3 15C6-2 32-2 35 15c-9 4-20 5-32 0z" fill="url(#gloss)" />
          <path d="M11 10c3-2 5-2 8-.5l-2 8.500c-3-1.500-5-1.500-8 .5z" fill="#ea6330" />
          <path d="M20.500 10.500c3 1.500 6 1 9-1l-2 8.500c-3 2-6 2-9 1z" fill="#8ec543" />
          <path d="M8.500 20c3-2 5-2 8-.5l-2 8c-3-1.500-5-1.500-8 .5z" fill="#46a5e6" />
          <path d="M18 20.500c3 1.500 6 1 9-1l-2 8.500c-3 2-6 1.500-9 .5z" fill="#fcc52f" />
        </svg>
        <div className="flex gap-[4px]">
          <TaskButton>
            <svg width="30" height="30" viewBox="0 0 30 30"><circle cx="15" cy="15" r="15" fill="#f4f4f4" /><path d="m7.500 7.500 7.500 9 7.500-9M15 15v10.500" fill="none" stroke="#e01b1b" strokeWidth="4" /></svg>
          </TaskButton>
          <TaskButton active><KLogo size={32} /></TaskButton>
          <TaskButton>
            <svg width="34" height="34" viewBox="0 0 34 34">
              <path d="M3 20C2 9 17 4 25 8c7 4 6 14-1 17-4 2-5-1-8 0-2 1-2 5-6 4-5 0-7-4-7-9z" fill="#d9e9f4" stroke="#92abc0" />
              <circle cx="8" cy="19" r="2.800" fill="#d85143" /><circle cx="13" cy="14" r="2.800" fill="#62b544" /><circle cx="19" cy="12" r="2.800" fill="#f1a83b" /><circle cx="16" cy="22" r="2.300" fill="#23374b" />
              <path d="M27 8 18 33" stroke="#e18a32" strokeWidth="3.500" /><path d="m25 1 8 3-3 8-5-2z" fill="#c6976a" />
            </svg>
          </TaskButton>
          <TaskButton className="to-[#59627a]">
            <svg width="34" height="32" viewBox="0 0 34 32">
              <path d="M2 3h11l2 3h17v24H2z" fill="#e6c96a" /><path d="M5 2h6M14 4h6M22 6h7" stroke="#f8f8e8" strokeWidth="3" />
              <path d="M5 2h3" stroke="#25a544" strokeWidth="2" /><path d="M14 4h3" stroke="#d84b3a" strokeWidth="2" /><path d="M23 6h4" stroke="#3a87d2" strokeWidth="2" />
              <path d="M2 9h30v21H2z" fill="#f5e397" /><path d="M8 31v-8c0-3 2-4 4-4h11c2 0 4 1 4 4v8h-4v-7H12v7z" fill="#86c9e6" stroke="#b5e3f2" />
            </svg>
          </TaskButton>
        </div>
        <div className="ml-auto flex items-start">
          <T w={16} className="mr-[6px] mt-[6px] text-[12.5px] leading-[20px] text-white">RU</T>
          <svg width="206" height="38" viewBox="1298 861 206 38" className="mr-[15px] shrink-0">
            <circle cx="1306" cy="877.500" r="7.500" fill="#1c42c4" stroke="#c7d3ee" />
            <text x="1306" y="882.500" textAnchor="middle" fill="#fff" fontWeight="700" fontSize="13" fontFamily="Open Sans, sans-serif">?</text>
            <path d="M1324.500 871.500h5v3h-5zM1327 870v-1.500h5v3.500h-2M1324.500 871h5" fill="none" stroke="#fff" />
            <path d="M1325 882h6l-3 3.200z" fill="#fff" />
            <path d="M1344 873h6v5h-6z" fill="#ddd" /><path d="M1342.500 878h9v9l-3 1.500h-3l-3-2z" fill="#777" />
            <circle cx="1353" cy="883.500" r="5" fill="#28a52c" /><path d="m1350.500 883.500 2 2.500 3.500-5" stroke="#fff" strokeWidth="1.700" fill="none" />
            <path d="M1366.500 874.500h14v10h-14z" fill="#12284f" stroke="#55616e" /><path d="m1368 882 3-5 2 3 2-4 2 2 2-2v5z" fill="#6fc1f0" /><path d="M1370 887h8" stroke="#999" strokeWidth="1.500" />
            <path d="M1392.500 874v12h7v-12zM1394.500 874v-2h3v2" stroke="#fff" fill="none" strokeWidth="1.200" />
            <path d="M1397 876h7v4c0 3-7 3-7 0z" fill="#fff" /><path d="M1399 873v4M1402.500 873v4M1400.700 882v5" stroke="#fff" strokeWidth="1.600" />
            <path d="m1391 880 8 8M1399 880l-8 8" stroke="#e81e1e" strokeWidth="2.800" />
            <path d="M1415 878h3l4-4v14l-4-4h-3z" fill="#fff" /><circle cx="1425" cy="883.500" r="4.200" fill="#c33" stroke="#f0d5d5" strokeWidth="1" /><path d="m1422.500 881.500 5 4" stroke="#fff" strokeWidth="1.500" />
            <path d="m1443 873 8 4v-4M1438 885l5-6 8 1 3 4-7 1-5 2z" fill="#51c9d6" stroke="#9cc" strokeWidth=".8" /><path d="M1441 888h12M1447 884v4" stroke="#b8a574" strokeWidth="1.300" />
            <path d="M1464.500 886v-2M1467.500 886v-4M1470.500 886v-6M1473.500 886v-8M1476.500 886v-10" stroke="#fff" strokeWidth="2" />
            <path d="M1487.700 874v14" stroke="#fff" strokeWidth="1.500" /><path d="M1490 875c4-2 4 2 11 0v8h-11z" fill="#fff" />
            <circle cx="1497" cy="883.500" r="4.500" fill="#d93328" /><path d="m1495 881.500 4 4M1499 881.500l-4 4" stroke="#fff" strokeWidth="1.400" />
          </svg>
          <div className="mr-[13px] flex w-[54px] flex-col items-center pt-[3px] text-[12px] leading-[17px] text-white">
            <T w={22}>9:34</T>
            <T w={55}>16.07.2021</T>
          </div>
          <div className="h-[38px] w-[14px] border border-[#77797c] bg-linear-to-br from-[#444] to-[#0d0d0d]" />
        </div>
      </div>
    </div>
  );
}

export default function App() {
  return (
    <div className="flex h-[900px] w-[1600px] flex-col overflow-hidden bg-[#f2f2f2] font-['Open_Sans','Noto_Sans',sans-serif]">
      <TopBar />
      <TabBar />
      <Ribbon />
      <div className="flex h-[715px] shrink-0">
        <Side />
        <div className="flex w-[1273px] flex-col bg-linear-to-b from-[#dedede] to-[#a8a8b2]">
          <ViewToolbar />
          <Drawing />
        </div>
      </div>
      <Taskbar />
    </div>
  );
}
